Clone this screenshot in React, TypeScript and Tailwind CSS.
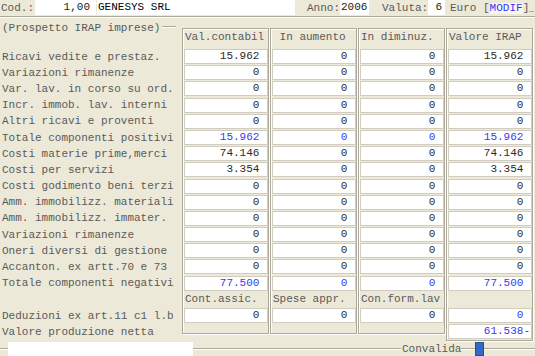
import React from "react";

type Cell =
  | { t: "f"; v: string; blue?: boolean }
  | { t: "h"; v: string }
  | { t: "e" };

type Row = { label: string; cells: Cell[] };

const f = (v: string, blue?: boolean): Cell => ({ t: "f", v, blue });
const zeros = (): Cell[] => [f("0"), f("0"), f("0"), f("0")];

const rows: Row[] = [
  { label: "Ricavi vedite e prestaz.", cells: [f("15.962"), f("0"), f("0"), f("15.962")] },
  { label: "Variazioni rimanenze", cells: zeros() },
  { label: "Var. lav. in corso su ord.", cells: zeros() },
  { label: "Incr. immob. lav. interni", cells: zeros() },
  { label: "Altri ricavi e proventi", cells: zeros() },
  {
    label: "Totale componenti positivi",
    cells: [f("15.962", true), f("0", true), f("0", true), f("15.962", true)],
  },
  { label: "Costi materie prime,merci", cells: [f("74.146"), f("0"), f("0"), f("74.146")] },
  { label: "Costi per servizi", cells: [f("3.354"), f("0"), f("0"), f("3.354")] },
  { label: "Costi godimento beni terzi", cells: zeros() },
  { label: "Amm. immobilizz. materiali", cells: zeros() },
  { label: "Amm. immobilizz. immater.", cells: zeros() },
  { label: "Variazioni rimanenze", cells: zeros() },
  { label: "Oneri diversi di gestione", cells: zeros() },
  { label: "Accanton. ex artt.70 e 73", cells: zeros() },
  {
    label: "Totale componenti negativi",
    cells: [f("77.500", true), f("0", true), f("0", true), f("77.500", true)],
  },
  {
    label: "",
    cells: [
      { t: "h", v: "Cont.assic." },
      { t: "h", v: "Spese appr." },
      { t: "h", v: "Con.form.lav" },
      { t: "e" },
    ],
  },
  { label: "Deduzioni ex art.11 c1 l.b", cells: [f("0"), f("0"), f("0"), f("0", true)] },
  { label: "Valore produzione netta", cells: [{ t: "e" }, { t: "e" }, { t: "e" }, f("61.538-", true)] },
];

const headers = ["Val.contabil", " In aumento", "In diminuz.", "Valore IRAP"];

function Column({ idx }: { idx: number }) {
  const last = idx === 3;
  return (
    <div className="w-[87px] border border-[#ACA899] pl-px pt-px shadow-[inset_1px_1px_0_#fff,1px_1px_0_#fff] flex flex-col">
      <div className="h-[19px] pl-px pt-[2px] whitespace-pre text-[#5A5A5A]">{headers[idx]}</div>
      {rows.map((r, i) => {
        const c = r.cells[idx];
        const isLast = i === rows.length - 1;
        if (isLast && !last) {
          return <div key={i} className="h-[9px]" />;
        }
        if (c.t === "f") {
          return (
            <div key={i} className="h-[16.2px]">
              <div
                className={
                  "h-[15px] bg-white border border-[#D0CCBF] flex items-center justify-end pr-px whitespace-pre " +
                  (c.blue ? "text-[#3838F6]" : "text-[#2A2A2A]")
                }
              >
                {c.v.endsWith("-") ? c.v : c.v + " "}
              </div>
            </div>
          );
        }
        if (c.t === "h") {
          return (
            <div key={i} className="h-[16.2px] flex items-center pl-px whitespace-pre text-[#5A5A5A]">
              {c.v}
            </div>
          );
        }
        return <div key={i} className="h-[16.2px]" />;
      })}
    </div>
  );
}

function Etched({ className }: { className: string }) {
  return <div className={"h-[2px] border-t border-[#ACA899] border-b border-b-white " + className} />;
}

export default function App() {
  return (
    <div className="w-[535px] h-[356px] overflow-hidden bg-[#ECE9D8] font-['Liberation_Mono',monospace] text-[11px] leading-none flex flex-col">
      {/* top bar */}
      <div className="h-[16px] flex items-stretch whitespace-pre shrink-0">
        <div className="w-[35px] pl-px flex items-center text-[#5A5A5A]">Cod.:</div>
        <div className="w-[61px] h-[15px] bg-white flex items-center justify-end pr-[6px] text-[#1A1A1A]">1,00</div>
        <div className="w-px" />
        <div className="w-[198px] h-[15px] bg-white flex items-center pl-px text-[#000000]">GENESYS SRL</div>
        <div className="w-[12px]" />
        <div className="w-[33px] flex items-center text-[#5A5A5A]">Anno:</div>
        <div className="w-[29px] h-[15px] bg-white flex items-center pl-px text-[#1A1A1A]">2006</div>
        <div className="w-[13px]" />
        <div className="w-[46px] flex items-center text-[#5A5A5A]">Valuta:</div>
        <div className="w-[17px] h-[15px] bg-white flex items-center justify-end pr-[3px] text-[#1A1A1A]">6</div>
        <div className="w-[5px]" />
        <div className="flex items-center text-[#5A5A5A]">
          Euro [<span className="bg-[#F7F6F1] text-[#3535F5]">MODIF</span>]
        </div>
        <div className="w-[5px] mt-[11px] h-0 border-t border-[#ACA899]" />
      </div>
      <div className="h-[2px] border-t border-[#ACA899] border-b border-b-white shrink-0" />

      {/* main */}
      <div className="flex items-start shrink-0">
        <div className="w-[182px] flex flex-col text-[#5A5A5A]">
          <div className="h-[31px] flex items-start pt-[5px] pl-[2px] whitespace-pre">
            <span>(Prospetto IRAP imprese)</span>
            <Etched className="ml-[2px] mt-[3px] w-[14px]" />
          </div>
          {rows.map((r, i) => (
            <div key={i} className="h-[16.2px] flex items-center pl-[2px] whitespace-pre">
              {r.label}
            </div>
          ))}
        </div>
        <div className="flex items-start gap-px mt-[10px]">
          {[0, 1, 2, 3].map((i) => (
            <Column key={i} idx={i} />
          ))}
        </div>
      </div>

      {/* status bar */}
      <div className="flex items-start h-[14px] mt-auto shrink-0">
        <Etched className="w-[8px] mt-[6px]" />
        <div className="w-[185px] h-[14px] bg-white" />
        <Etched className="w-[208px] mt-[6px]" />
        <div className="w-[60px] h-[14px] flex items-center pl-px text-[#5A5A5A]">Convalida</div>
        <Etched className="w-[14px] mt-[6px]" />
        <div className="w-[9px] h-[14px] bg-[#316AC5] border border-[#1E4FA5]" />
        <Etched className="flex-1 mt-[6px]" />
      </div>
    </div>
  );
}
